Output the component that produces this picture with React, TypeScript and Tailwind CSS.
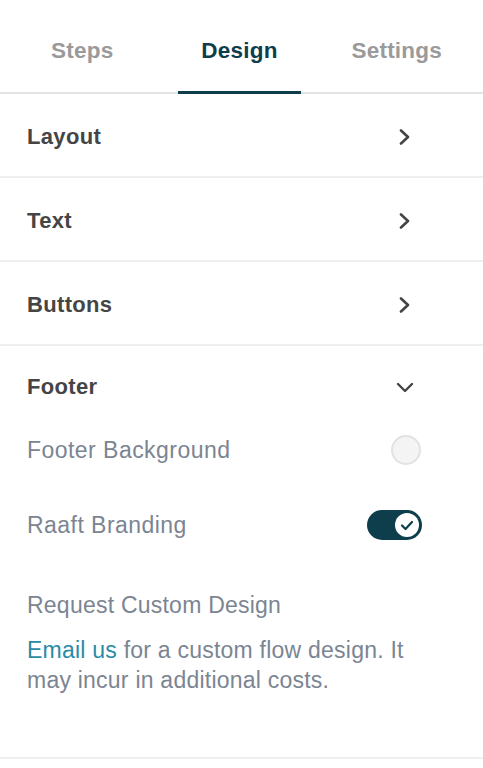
import React from "react";

const Chevron = () => (
  <svg width="12" height="16" viewBox="0 0 12 16" fill="none" className="mr-[72px]">
    <path d="M2 1.5 L9 8 L2 14.5" stroke="#444" strokeWidth="2.6" strokeLinecap="round" strokeLinejoin="round" />
  </svg>
);

const ChevronDown = () => (
  <svg width="18" height="11" viewBox="0 0 18 11" fill="none" className="mr-[69px]">
    <path d="M2 2 L9 9 L16 2" stroke="#444" strokeWidth="2.4" strokeLinecap="round" strokeLinejoin="round" />
  </svg>
);

export default function App() {
  const font = { fontFamily: '"Liberation Sans", Arial, Helvetica, sans-serif' };
  return (
    <div className="w-[483px] h-[768px] bg-white overflow-hidden" style={font}>
      {/* Tabs */}
      <div className="flex border-b-2 border-[#e3e3e3] pl-[27px] pr-[17px] justify-between">
        <div className="px-6 pt-[37px] pb-[26px] -mb-[2px] border-b-[3px] border-transparent text-[22.5px] leading-[28px] font-bold text-[#9a9a9a] tracking-[0.01em]">
          Steps
        </div>
        <div className="ml-[14px] px-[23px] pt-[37px] pb-[26px] -mb-[2px] border-b-[3px] border-[#0e3d4b] text-[22.5px] leading-[28px] font-bold text-[#0e3d4b] tracking-[0.01em]">
          Design
        </div>
        <div className="px-6 pt-[37px] pb-[26px] -mb-[2px] border-b-[3px] border-transparent text-[22.5px] leading-[28px] font-bold text-[#9a9a9a] tracking-[0.01em]">
          Settings
        </div>
      </div>

      {["Layout", "Text", "Buttons"].map((t) => (
        <div key={t} className="h-[84px] flex items-center justify-between pl-[27px] pt-[3px] border-b-2 border-[#efefef]">
          <span className="text-[22px] leading-[28px] font-bold text-[#454545] tracking-[0.015em]">{t}</span>
          <Chevron />
        </div>
      ))}

      {/* Footer section */}
      <div className="pl-[27px] pt-[27px] pb-[62px] border-b-2 border-[#efefef]">
        <div className="flex items-center justify-between h-[28px]">
          <span className="text-[22px] leading-[28px] font-bold text-[#454545] tracking-[0.015em]">Footer</span>
          <ChevronDown />
        </div>

        <div className="flex items-center justify-between h-[30px] mt-[34px]">
          <span className="text-[23px] leading-[30px] text-[#7b8592] tracking-[0.02em]">Footer Background</span>
          <div className="w-[30px] h-[30px] rounded-full bg-[#f4f4f4] border-2 border-[#e2e2e2] mr-[62px]" />
        </div>

        <div className="flex items-center justify-between h-[30px] mt-[45px]">
          <span className="text-[23px] leading-[30px] text-[#7b8592] tracking-[0.02em]">Raaft Branding</span>
          <div className="w-[55px] h-[30px] rounded-full bg-[#0e3d4b] mr-[61px] flex items-center justify-end pr-[3px]">
            <div className="w-[24px] h-[24px] rounded-full bg-white flex items-center justify-center">
              <svg width="14" height="11" viewBox="0 0 14 11" fill="none">
                <path d="M2 5.5 L5.5 9 L12 2" stroke="#0e3d4b" strokeWidth="2.2" strokeLinecap="round" strokeLinejoin="round" />
              </svg>
            </div>
          </div>
        </div>

        <div className="mt-[50px] text-[23px] leading-[30px] text-[#7b8592] tracking-[0.01em]">
          Request Custom Design
        </div>
        <p className="mt-[15px] pr-[50px] text-[23px] leading-[30px] text-[#7b8592] tracking-[0.01em]">
          <span className="text-[#2a8ba6]">Email us</span> for a custom flow design. It may incur in additional costs.
        </p>
      </div>
    </div>
  );
}
